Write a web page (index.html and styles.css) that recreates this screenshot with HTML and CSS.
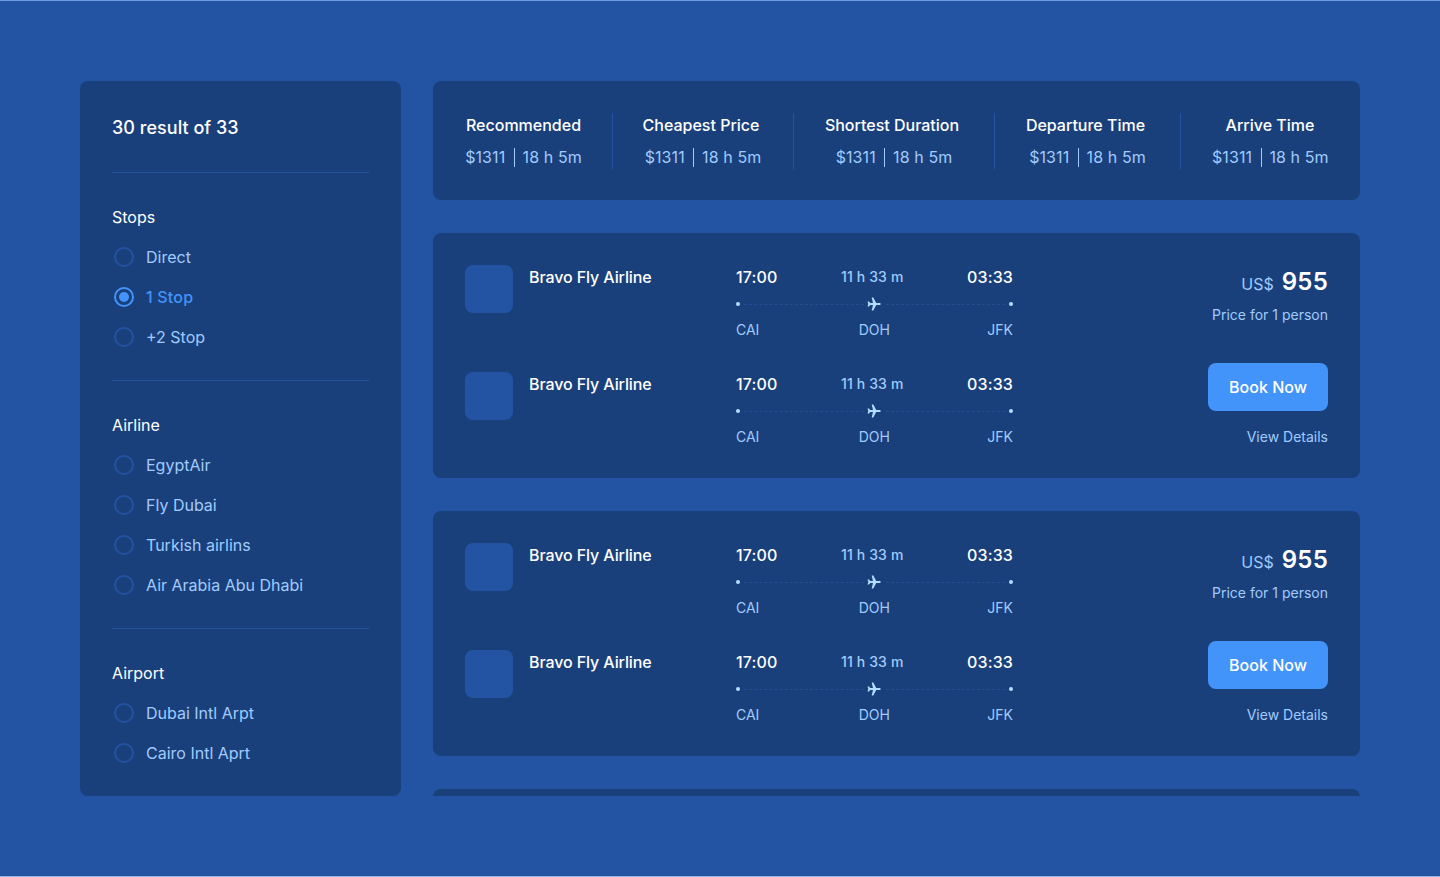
FILE: index.html
```
<!DOCTYPE html>
<html lang="en">
<head>
<meta charset="utf-8">
<title>Flight results</title>
<link rel="stylesheet" href="styles.css">
</head>
<body>
<svg width="0" height="0" class="defs" aria-hidden="true">
  <symbol id="plane" viewBox="0 0 14 14">
    <path d="M13.700 7c0-.65-.5-1.050-1.200-1.050H9.200L6.300.6H4.700l1.300 5.350H3.200L2 4.400H.5L1.300 7 .5 9.600H2l1.200-1.550H6L4.700 13.400h1.600l2.900-5.350h3.300c.7 0 1.200-.4 1.200-1.050z" fill="currentColor"/>
  </symbol>
</svg>
<div class="page">
  <aside class="filters">
    <h1 class="filters-title">30 result of 33</h1>
    <section class="group">
      <h2 class="group-title">Stops</h2>
      <div class="option"><span class="radio"></span>Direct</div>
      <div class="option selected"><span class="radio"></span>1 Stop</div>
      <div class="option"><span class="radio"></span>+2 Stop</div>
    </section>
    <section class="group">
      <h2 class="group-title">Airline</h2>
      <div class="option"><span class="radio"></span>EgyptAir</div>
      <div class="option"><span class="radio"></span>Fly Dubai</div>
      <div class="option"><span class="radio"></span>Turkish airlins</div>
      <div class="option"><span class="radio"></span>Air Arabia Abu Dhabi</div>
    </section>
    <section class="group">
      <h2 class="group-title">Airport</h2>
      <div class="option"><span class="radio"></span>Dubai Intl Arpt</div>
      <div class="option"><span class="radio"></span>Cairo Intl Aprt</div>
    </section>
  </aside>
  <main class="results">
    <div class="sorts">
      <div class="sort"><div class="sort-name">Recommended</div><div class="sort-info">$1311 <i class="bar"></i> 18 h 5m</div></div>
      <div class="sort"><div class="sort-name">Cheapest Price</div><div class="sort-info">$1311 <i class="bar"></i> 18 h 5m</div></div>
      <div class="sort"><div class="sort-name">Shortest Duration</div><div class="sort-info">$1311 <i class="bar"></i> 18 h 5m</div></div>
      <div class="sort"><div class="sort-name">Departure Time</div><div class="sort-info">$1311 <i class="bar"></i> 18 h 5m</div></div>
      <div class="sort"><div class="sort-name">Arrive Time</div><div class="sort-info">$1311 <i class="bar"></i> 18 h 5m</div></div>
    </div>
    <article class="card">
      <div class="legs">
        <div class="leg">
          <div class="logo"></div><div class="airline">Bravo Fly Airline</div>
          <div class="route">
            <div class="times"><b>17:00</b><span>11 h 33 m</span><b>03:33</b></div>
            <div class="track"><i class="dot"></i><i class="dash"></i><svg class="plane"><use href="#plane"/></svg><i class="dash"></i><i class="dot"></i></div>
            <div class="codes"><span>CAI</span><span>DOH</span><span>JFK</span></div>
          </div>
        </div>
        <div class="leg">
          <div class="logo"></div><div class="airline">Bravo Fly Airline</div>
          <div class="route">
            <div class="times"><b>17:00</b><span>11 h 33 m</span><b>03:33</b></div>
            <div class="track"><i class="dot"></i><i class="dash"></i><svg class="plane"><use href="#plane"/></svg><i class="dash"></i><i class="dot"></i></div>
            <div class="codes"><span>CAI</span><span>DOH</span><span>JFK</span></div>
          </div>
        </div>
      </div>
      <div class="buy">
        <div class="price"><span class="currency">US$</span><strong class="amount">955</strong></div>
        <div class="note">Price for 1 person</div>
        <button class="book">Book Now</button>
        <a class="details">View Details</a>
      </div>
    </article>
    <article class="card">
      <div class="legs">
        <div class="leg">
          <div class="logo"></div><div class="airline">Bravo Fly Airline</div>
          <div class="route">
            <div class="times"><b>17:00</b><span>11 h 33 m</span><b>03:33</b></div>
            <div class="track"><i class="dot"></i><i class="dash"></i><svg class="plane"><use href="#plane"/></svg><i class="dash"></i><i class="dot"></i></div>
            <div class="codes"><span>CAI</span><span>DOH</span><span>JFK</span></div>
          </div>
        </div>
        <div class="leg">
          <div class="logo"></div><div class="airline">Bravo Fly Airline</div>
          <div class="route">
            <div class="times"><b>17:00</b><span>11 h 33 m</span><b>03:33</b></div>
            <div class="track"><i class="dot"></i><i class="dash"></i><svg class="plane"><use href="#plane"/></svg><i class="dash"></i><i class="dot"></i></div>
            <div class="codes"><span>CAI</span><span>DOH</span><span>JFK</span></div>
          </div>
        </div>
      </div>
      <div class="buy">
        <div class="price"><span class="currency">US$</span><strong class="amount">955</strong></div>
        <div class="note">Price for 1 person</div>
        <button class="book">Book Now</button>
        <a class="details">View Details</a>
      </div>
    </article>
    <article class="card"></article>
  </main>
</div>
</body>
</html>
```
FILE: styles.css
```
* { box-sizing: border-box; }
body { margin: 0; background: #2354a3; font-family: Inter, sans-serif; color: #fff; font-size: 16px; line-height: 24px; }
h1, h2 { margin: 0; font-weight: 400; }
.defs { display: block; }
.page { height: 877px; border-top: 1px solid #6f9de0; border-bottom: 1px solid #9bb5de; padding: 80px; display: grid; grid-template-columns: 321px 927px; gap: 32px; overflow: hidden; }
.filters { height: 715px; background: #1a407c; border-radius: 8px; padding: 33px 32px 0; }
.filters-title { font-size: 18px; font-weight: 500; line-height: 28px; padding-bottom: 30px; letter-spacing: 0.03px; }
.group { border-top: 1px solid #2354a3; padding-top: 32px; margin-bottom: 31px; }
.group-title { font-size: 16px; line-height: 24px; }
.option { display: flex; align-items: center; gap: 12px; margin-top: 16px; padding-left: 2px; color: #a0cbfc; }
.radio { width: 20px; height: 20px; border: 2px solid #2451a0; border-radius: 50%; display: grid; place-items: center; }
.selected { color: #4294fa; font-weight: 500; letter-spacing: 0.2px; }
.selected .radio { border-color: #4294fa; }
.selected .radio::after { content: ""; width: 10px; height: 10px; border-radius: 50%; background: #4294fa; }
.results { height: 715px; overflow: hidden; display: flex; flex-direction: column; gap: 33px; }
.sorts { flex: none; height: 119px; background: #1a407c; border-radius: 8px; padding: 32px; display: grid; grid-template-columns: 148px 181px 201px 186px 147px; }
.sort { height: 56px; border-right: 1px solid #2354a3; text-align: center; white-space: nowrap; }
.sort:first-child { padding-right: 30px; }
.sort:last-child { border-right: 0; padding-left: 31px; }
.sort-name { font-weight: 500; }
.sort:not(:first-child):not(:last-child) .sort-name { padding-right: 4px; }
.sort-info { margin-top: 8px; color: #a0cbfc; letter-spacing: 0.1px; }
.bar { display: inline-block; width: 1px; height: 19px; margin: 0 3px 0 4px; background: #a0cbfc; vertical-align: -4px; }
.card { flex: none; height: 245px; background: #1a407c; border-radius: 8px; padding: 32px; display: flex; justify-content: space-between; }
.legs { display: flex; flex-direction: column; gap: 32px; }
.leg { height: 75px; display: grid; grid-template-columns: 48px 191px 277px; column-gap: 16px; }
.logo { width: 48px; height: 48px; border-radius: 8px; background: #2354a3; }
.airline { font-weight: 500; letter-spacing: -0.1px; }
.times, .codes { display: flex; justify-content: space-between; }
.times b { font-weight: 500; letter-spacing: 0.15px; }
.times span { font-size: 14px; font-weight: 500; color: #a0cbfc; letter-spacing: 0.15px; }
.track { height: 14px; display: flex; align-items: center; margin-top: 8px; color: #b5dcff; }
.dot { width: 4px; height: 4px; border-radius: 50%; background: #b5dcff; }
.dash { flex: 1; border-top: 1px dashed #234f91; margin: 0 4px; }
.plane { width: 14px; height: 14px; margin: 0 1px 0 -1px; }
.codes { margin-top: 7px; font-size: 14px; color: #a0cbfc; }
.codes span:nth-child(2) { padding-left: 2px; }
.buy { display: flex; flex-direction: column; align-items: flex-end; color: #a0cbfc; font-size: 14px; white-space: nowrap; }
.price { flex: none; display: flex; align-items: baseline; gap: 8px; height: 33px; line-height: 33px; }
.currency { font-size: 16px; }
.amount { font-size: 24px; font-weight: 600; color: #fff; letter-spacing: 0.25px; }
.note { margin-top: 5px; }
.book { flex: none; width: 120px; height: 48px; margin-top: 36px; border: 0; border-radius: 8px; background: #4294fa; color: #fff; font: 500 16px/24px Inter, sans-serif; }
.details { margin-top: 14px; }
```
